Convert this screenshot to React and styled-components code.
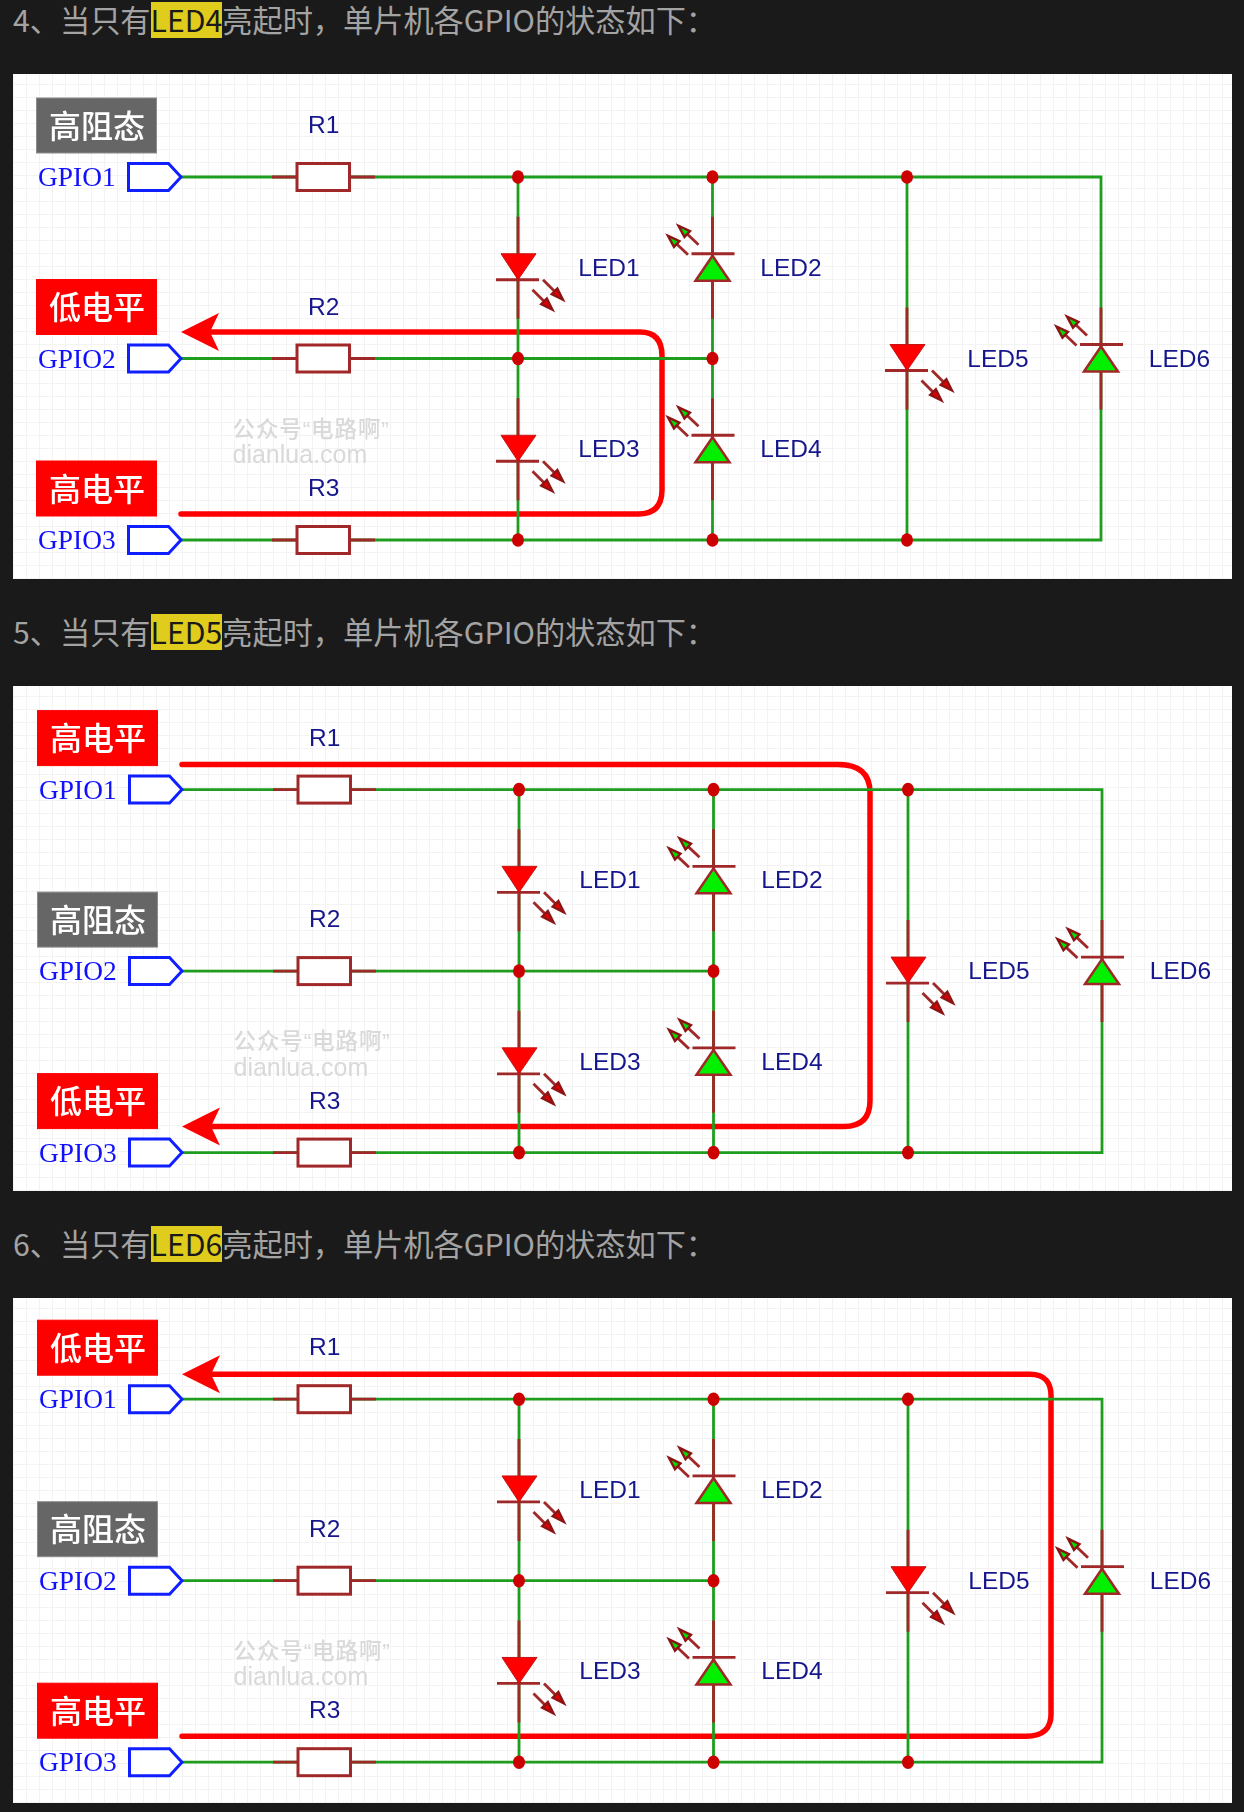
import React from 'react';
import styled, { createGlobalStyle } from 'styled-components';

const GlobalStyle = createGlobalStyle`
  html, body {
    margin: 0;
    background: #1a1a1a;
  }
`;

const WIRE_Y = [103, 284.5, 466];
const BUS_X = [505, 699.5, 894, 1088];

const PANELS = [
  {
    id: 4,
    dx: 0,
    dy: 0,
    states: ['z', 'low', 'high'],
    arrow: { tipX: 168, y: 258 },
    current: 'M 197 258 H 627 Q 649 258 649 282 V 416 Q 649 440 625 440 H 168',
  },
  {
    id: 5,
    dx: 1,
    dy: 0.6,
    states: ['high', 'z', 'low'],
    arrow: { tipX: 168, y: 440 },
    current: 'M 168 78 H 824 Q 856 78 856 106 V 414 Q 856 440 830 440 H 197',
  },
  {
    id: 6,
    dx: 1,
    dy: -1.8,
    states: ['low', 'z', 'high'],
    arrow: { tipX: 168, y: 78 },
    current: 'M 197 78 H 1016 Q 1038 78 1037 102 V 416 Q 1038 440 1012 440 H 168',
  },
];

const STATE_TEXT = { z: '高阻态', low: '低电平', high: '高电平' };

const Page = styled.div`
  width: 1244px;
  height: 1812px;
  padding: 2px 12px 0 13px;
  box-sizing: border-box;
  overflow: hidden;
  background: #1a1a1a;
`;

const Section = styled.section`
  margin-bottom: 35px;
`;

const Heading = styled.p`
  height: 36px;
  margin: 0 0 36px;
  font-family: 'Noto Sans CJK SC', 'Noto Sans', sans-serif;
  font-size: 30.2px;
  line-height: 34px;
  color: #a3a3a3;
  white-space: nowrap;
`;

const Mark = styled.span`
  display: inline-block;
  height: 36px;
  background: #e0cc1c;
  color: #1a1a1a;
`;

const Panel = styled.div`
  width: 1219px;
  height: 505px;
  background-color: #fff;
  background-image:
    linear-gradient(#f3f3f3 1.5px, transparent 1.5px),
    linear-gradient(90deg, #f3f3f3 1.5px, transparent 1.5px);
  background-size: 13px 13px;
  background-position: 0 10px;
`;

const Diagram = styled.svg`
  display: block;
  width: 1219px;
  height: 505px;
  filter: blur(0.35px);
`;

const Wire = styled.path`
  fill: none;
  stroke: #1f9d1f;
  stroke-width: 2.8;
`;

const Lead = styled.path`
  fill: none;
  stroke: #a02828;
  stroke-width: 2.8;
`;

const Current = styled.path`
  fill: none;
  stroke: #ff0000;
  stroke-width: 5.5;
  stroke-linecap: round;
`;

const PortShape = styled.path`
  fill: #fff;
  stroke: #0f1fff;
  stroke-width: 3;
`;

const ResistorBody = styled.rect`
  fill: #fff;
  stroke: #a02828;
  stroke-width: 3;
`;

const BadgeBox = styled.rect`
  fill: ${({ $state }) => ($state === 'z' ? '#666666' : '#ff0000')};
  stroke: ${({ $state }) => ($state === 'z' ? '#8c8c8c' : '#ff0000')};
  stroke-width: 1;
`;

const BadgeText = styled.text`
  font-family: 'Noto Sans CJK SC', sans-serif;
  font-size: 32px;
  font-weight: 500;
  fill: #fff;
  text-anchor: middle;
`;

const GpioText = styled.text`
  font-family: 'Liberation Serif', serif;
  font-size: 27.4px;
  fill: #1010ff;
`;

const PartText = styled.text`
  font-family: 'Liberation Sans', sans-serif;
  font-size: 24.5px;
  fill: #16168c;
`;

const MarkText = styled.text`
  font-family: ${({ $cjk }) => ($cjk ? "'Liberation Sans', 'Noto Sans CJK SC', sans-serif" : "'Liberation Sans', sans-serif")};
  font-size: ${({ $cjk }) => ($cjk ? '22.5px' : '25px')};
  font-weight: ${({ $cjk }) => ($cjk ? 500 : 400)};
  letter-spacing: ${({ $cjk }) => ($cjk ? '0.9px' : '0')};
  fill: #d9d9d9;
`;

const Dot = styled.ellipse`
  fill: #cc0000;
`;

const Emitter = ({ x1, y1, x2, y2, fill }) => {
  const len = Math.hypot(x2 - x1, y2 - y1);
  const ux = (x2 - x1) / len;
  const uy = (y2 - y1) / len;
  const bx = x2 - ux * 12;
  const by = y2 - uy * 12;
  return (
    <g>
      <Lead d={`M ${x1} ${y1} L ${bx} ${by}`} />
      <path
        d={`M ${x2} ${y2} L ${bx - uy * 4} ${by + ux * 4} L ${bx + uy * 4} ${by - ux * 4} Z`}
        fill={fill}
        stroke="#8c1414"
        strokeWidth="2.4"
      />
    </g>
  );
};

const Led = ({ cx, cy, lit, label, down }) => {
  if (down) {
    return (
      <g>
        <Lead d={`M ${cx} ${cy - 51} V ${cy + 51} M ${cx - 22} ${cy + 12} H ${cx + 21}`} />
        <path d={`M ${cx - 17} ${cy - 14} H ${cx + 18} L ${cx} ${cy + 12} Z`} fill="#ff0000" stroke="#c41414" strokeWidth="1" />
        <Emitter x1={cx + 25} y1={cy + 12} x2={cx + 45} y2={cy + 32} fill="#e00000" />
        <Emitter x1={cx + 14.5} y1={cy + 22} x2={cx + 34.5} y2={cy + 42} fill="#e00000" />
        <PartText x={cx + 60.3} y={cy + 8}>{label}</PartText>
      </g>
    );
  }
  return (
    <g>
      <Lead d={`M ${cx} ${cy - 51} V ${cy + 51} M ${cx - 21} ${cy - 14} H ${cx + 22}`} />
      <path d={`M ${cx} ${cy - 12} L ${cx + 17} ${cy + 13} H ${cx - 17} Z`} fill={lit} stroke="#a02828" strokeWidth="2.5" />
      <Emitter x1={cx - 14} y1={cy - 23} x2={cx - 34} y2={cy - 42} fill="#00e000" />
      <Emitter x1={cx - 24.5} y1={cy - 13} x2={cx - 44.5} y2={cy - 32} fill="#00e000" />
      <PartText x={cx + 47.8} y={cy + 8}>{label}</PartText>
    </g>
  );
};

const InputRow = ({ index, state }) => {
  const y = WIRE_Y[index];
  return (
    <g>
      <BadgeBox $state={state} x="23.5" y={y - 79} width="120" height="55" />
      <BadgeText x="84" y={y - 39.5}>{STATE_TEXT[state]}</BadgeText>
      <GpioText x="25" y={y + 9}>{`GPIO${index + 1}`}</GpioText>
      <PortShape d={`M 115.5 ${y - 13.5} H 155.5 L 168 ${y} L 155.5 ${y + 13.5} H 115.5 Z`} />
      <Lead d={`M 259 ${y} H 362`} />
      <ResistorBody x="284" y={y - 13.5} width="52.5" height="27" />
      <PartText x="295" y={y - 44}>{`R${index + 1}`}</PartText>
    </g>
  );
};

const Schematic = ({ panel }) => {
  const { dx, dy, states, arrow, current } = panel;
  const { tipX, y: ay } = arrow;
  const [y1, y2, y3] = WIRE_Y;
  const [x1, x2, x3, x4] = BUS_X;
  const midA = (y1 + y2) / 2;
  const midB = (y2 + y3) / 2;
  return (
    <Diagram viewBox="0 0 1219 505">
      <g transform={`translate(${dx} ${dy})`}>
        <MarkText $cjk x="219.5" y="362.5">公众号“电路啊”</MarkText>
        <MarkText x="219.5" y="389">dianlua.com</MarkText>
        <Current d={current} />
        <path
          d={`M ${tipX} ${ay} L ${tipX + 38} ${ay - 19} L ${tipX + 29} ${ay} L ${tipX + 38} ${ay + 19} Z`}
          fill="#ff0000"
        />
        <Wire d={`M 168 ${y1} H ${x4} V ${y3} H 168 M 168 ${y2} H ${x2} M ${x1} ${y1} V ${y3} M ${x2} ${y1} V ${y3} M ${x3} ${y1} V ${y3}`} />
        {states.map((state, i) => (
          <InputRow key={i} index={i} state={state} />
        ))}
        <Led cx={x1} cy={midA} down label="LED1" />
        <Led cx={x2} cy={midA} lit="#00f000" label="LED2" />
        <Led cx={x1} cy={midB} down label="LED3" />
        <Led cx={x2} cy={midB} lit="#00f000" label="LED4" />
        <Led cx={x3} cy={y2} down label="LED5" />
        <Led cx={x4} cy={y2} lit="#00f000" label="LED6" />
        {[x1, x2, x3].map((x) => (
          <React.Fragment key={x}>
            <Dot cx={x} cy={y1} rx="6" ry="6.8" />
            <Dot cx={x} cy={y3} rx="6" ry="6.8" />
          </React.Fragment>
        ))}
        <Dot cx={x1} cy={y2} rx="6" ry="6.8" />
        <Dot cx={x2} cy={y2} rx="6" ry="6.8" />
      </g>
    </Diagram>
  );
};

export default function App() {
  return (
    <Page>
      <GlobalStyle />
      {PANELS.map((panel) => (
        <Section key={panel.id}>
          <Heading>
            {panel.id}、当只有<Mark>LED{panel.id}</Mark>亮起时，单片机各GPIO的状态如下：
          </Heading>
          <Panel>
            <Schematic panel={panel} />
          </Panel>
        </Section>
      ))}
    </Page>
  );
}
